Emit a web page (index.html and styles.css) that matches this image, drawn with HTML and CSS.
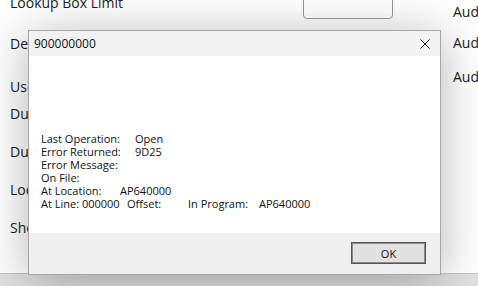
FILE: index.html
```html
<!DOCTYPE html>
<html lang="en">
<head>
    <meta charset="UTF-8">
    <meta name="viewport" content="width=device-width, initial-scale=1.0">
    <title>900000000</title>
    <link rel="stylesheet" href="styles.css">
</head>
<body>
    <div class="page">
        <div class="form">
            <div class="labels">
                <div>Lookup Box Limit</div>
                <div>Default</div>
                <div>Use</div>
                <div>Duplicate</div>
                <div>Duration</div>
                <div>Lookup</div>
                <div>Show</div>
            </div>
            <div class="field">
                <div class="textbox"></div>
            </div>
            <div class="audit">
                <div>Audit</div>
                <div>Audit</div>
                <div>Audit</div>
            </div>
        </div>
        <div class="statusbar"></div>
    </div>

    <div class="dialog">
        <div class="titlebar">
            <span class="title">900000000</span>
            <svg class="close" width="10" height="10" viewBox="0 0 10 10">
                <path d="M0.5 0.5 L9.5 9.5 M9.5 0.5 L0.5 9.5" stroke="#1a1a1a" stroke-width="1" fill="none"/>
            </svg>
        </div>
        <div class="message">
            <div><span class="key">Last Operation:</span>Open</div>
            <div><span class="key">Error Returned:</span>9D25</div>
            <div>Error Message:</div>
            <div>On File:</div>
            <div><span class="key short">At Location:</span>AP640000</div>
            <div><span class="line">At Line: 000000</span><span class="offset">Offset:</span><span class="prog">In Program:</span>AP640000</div>
        </div>
        <div class="footer">
            <button type="button">OK</button>
        </div>
    </div>
</body>
</html>
```

FILE: styles.css
```css
body {
    margin: 0;
    font-family: "Open Sans", "Noto Sans", sans-serif;
    color: #1b1b1b;
    background: #fff;
}
.page {
    width: 478px;
    height: 286px;
    overflow: hidden;
    display: flex;
    flex-direction: column;
}
.form {
    flex: 1;
    display: flex;
    font-size: 14px;
    line-height: 20px;
}
.labels {
    flex-shrink: 0;
    margin-top: -7px;
    padding-left: 10px;
    width: 293px;
    display: grid;
    grid-template-rows: 41px 43px 27px 38px 38px 38px 20px;
    align-content: start;
    white-space: nowrap;
}
.field {
    flex-shrink: 0;
    width: 150px;
}
.textbox {
    margin-top: -11px;
    width: 88px;
    height: 28px;
    border: 1px solid #9a9a9a;
    border-radius: 4px;
    background: #fff;
}
.audit {
    flex-shrink: 0;
    padding-top: 2px;
    display: grid;
    grid-template-rows: 31px 34px 20px;
    align-content: start;
    white-space: nowrap;
}
.statusbar {
    height: 12px;
    border-top: 1px solid #c4c4c4;
    background: #e0e0e0;
}
.dialog {
    position: absolute;
    left: 28px;
    top: 30px;
    width: 411px;
    height: 243px;
    border: 1px solid #a6a6a6;
    background: #fff;
    display: flex;
    flex-direction: column;
    box-shadow: 0 6px 45px rgba(0, 0, 0, 0.3);
}
.titlebar {
    height: 25px;
    background: #f3f3f3;
    display: flex;
    align-items: center;
    justify-content: space-between;
    padding: 0 10px 0 5px;
}
.title {
    font-size: 12px;
    color: #111;
}
.close {
    margin-top: 1px;
}
.message {
    flex: 1;
    padding: 76px 0 0 12px;
    font-size: 11px;
    line-height: 13px;
    color: #111;
    white-space: nowrap;
}
.key {
    display: inline-block;
    width: 94px;
}
.key.short {
    width: 79px;
}
.line {
    display: inline-block;
    width: 86px;
}
.offset {
    display: inline-block;
    width: 61px;
}
.prog {
    display: inline-block;
    width: 71px;
}
.footer {
    height: 41px;
    background: #f0f0f0;
    display: flex;
    justify-content: flex-end;
    align-items: flex-start;
    padding: 9px 14px 0 0;
    box-sizing: border-box;
}
button {
    width: 75px;
    height: 22px;
    border: 1px solid #555;
    box-shadow: inset 0 0 0 1px #8a8a8a;
    background: #e1e1e1;
    font-family: "Open Sans", "Noto Sans", sans-serif;
    font-size: 11px;
    color: #111;
    padding: 0;
}
```
